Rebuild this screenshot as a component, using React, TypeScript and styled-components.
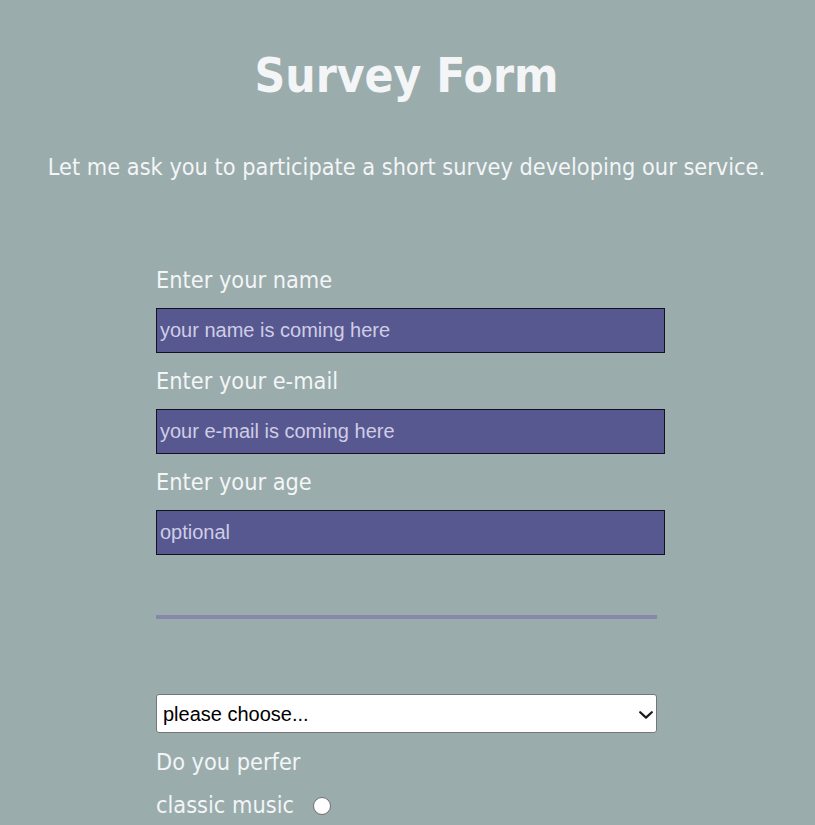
import React from "react";
import styled, { createGlobalStyle } from "styled-components";

const Global = createGlobalStyle`
  html, body { margin: 0; padding: 0; }
  body {
    background: #9aacab;
    font-family: Tahoma, "DejaVu Sans Condensed", "DejaVu Sans", sans-serif;
    color: #f3f5f7;
  }
`;

const Page = styled.div`
  display: flex;
  flex-direction: column;
  align-items: center;
  padding: 44px 2px 40px 0;
`;

const Title = styled.h1`
  margin: 0;
  font-size: 47.5px;
  line-height: 64px;
  font-weight: bold;
  text-align: center;
`;

const Lead = styled.p`
  margin: 45px 0 0;
  font-size: 23.3px;
  line-height: 28px;
  text-align: center;
`;

const Form = styled.form`
  width: 501px;
  margin-top: 71px;
  display: flex;
  flex-direction: column;
`;

const Label = styled.label`
  display: block;
  font-size: 23.3px;
  line-height: 56px;
  height: 56px;
`;

const Input = styled.input`
  box-sizing: border-box;
  width: 509px;
  height: 45px;
  margin: 0;
  padding: 0 3px;
  background: #575890;
  border: 1px solid #111122;
  color: #e6e6f5;
  font-family: Arial, "Liberation Sans", sans-serif;
  font-size: 20px;
  outline: none;
  &::placeholder { color: #cfcde6; opacity: 1; }
`;

const Field = styled.div`
  display: flex;
  flex-direction: column;
`;

const Rule = styled.hr`
  width: 501px;
  margin: 60px 0 0;
  border: none;
  height: 4px;
  background: #8787ae;
`;

const SelectWrap = styled.div`
  position: relative;
  width: 501px;
  height: 39px;
  margin-top: 75px;
`;

const Select = styled.select`
  box-sizing: border-box;
  appearance: none;
  -webkit-appearance: none;
  width: 100%;
  height: 100%;
  margin: 0;
  padding: 0 30px 0 6px;
  background: #ffffff;
  border: 1px solid #767676;
  border-radius: 3px;
  color: #000;
  font-family: Arial, "Liberation Sans", sans-serif;
  font-size: 20px;
`;

const Chevron = styled.svg`
  position: absolute;
  right: 4px;
  top: 17px;
  width: 14px;
  height: 8px;
  pointer-events: none;
`;

const Question = styled.p`
  margin: 15px 0 0;
  font-size: 23.3px;
  line-height: 28px;
`;

const RadioRow = styled.label`
  display: flex;
  align-items: center;
  gap: 19px;
  margin-top: 15px;
  font-size: 23.3px;
  line-height: 28px;
`;

const Radio = styled.input`
  appearance: none;
  -webkit-appearance: none;
  box-sizing: border-box;
  width: 18px;
  height: 18px;
  margin: 1px 0 0;
  border: 1px solid #6f6f6f;
  border-radius: 50%;
  background: #ffffff;
`;

const fields = [
  { label: "Enter your name", placeholder: "your name is coming here", type: "text" },
  { label: "Enter your e-mail", placeholder: "your e-mail is coming here", type: "email" },
  { label: "Enter your age", placeholder: "optional", type: "number" },
];

export default function App() {
  return (
    <>
      <Global />
      <Page>
        <Title>Survey Form</Title>
        <Lead>Let me ask you to participate a short survey developing our service.</Lead>
        <Form onSubmit={(e) => e.preventDefault()}>
          {fields.map((f) => (
            <Field key={f.label}>
              <Label>{f.label}</Label>
              <Input type={f.type} placeholder={f.placeholder} />
            </Field>
          ))}
          <Rule />
          <SelectWrap>
            <Select defaultValue="">
              <option value="">please choose...</option>
              <option value="a">option</option>
            </Select>
            <Chevron viewBox="0 0 14 8" aria-hidden="true">
              <path d="M1.2 1.2 L7 6.6 L12.8 1.2" fill="none" stroke="#1a1a1a" strokeWidth="2.2" strokeLinecap="round" strokeLinejoin="round" />
            </Chevron>
          </SelectWrap>
          <Question>Do you perfer</Question>
          <RadioRow>
            classic music
            <Radio type="radio" name="music" />
          </RadioRow>
        </Form>
      </Page>
    </>
  );
}
